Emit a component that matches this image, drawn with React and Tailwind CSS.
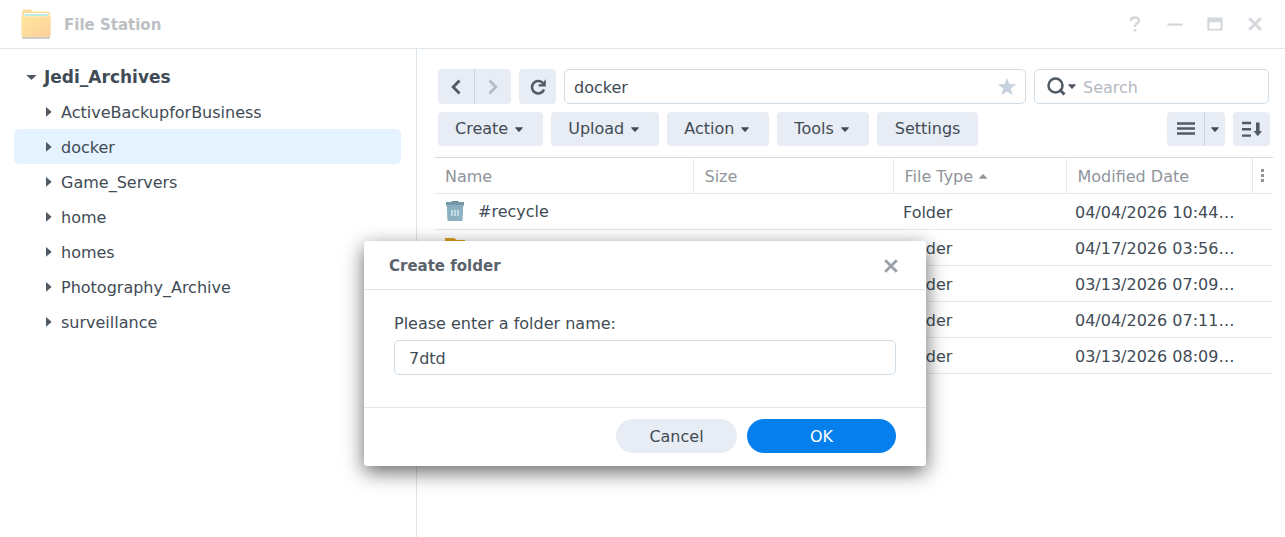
import React, { useState } from 'react';

const FOLDERS = [
  'ActiveBackupforBusiness',
  'docker',
  'Game_Servers',
  'home',
  'homes',
  'Photography_Archive',
  'surveillance',
];

const FILES = [
  { name: '#recycle', kind: 'trash', date: '04/04/2026 10:44:12' },
  { name: 'ad', kind: 'folder', date: '04/17/2026 03:56:40' },
  { name: '', kind: 'folder', date: '03/13/2026 07:09:25' },
  { name: '', kind: 'folder', date: '04/04/2026 07:11:31' },
  { name: '', kind: 'folder', date: '03/13/2026 08:09:02' },
];

const FolderLogo = () => (
  <svg width="32" height="32" viewBox="0 0 32 32" aria-hidden="true">
    <defs>
      <linearGradient id="front" x1="0" y1="0" x2="1" y2="1">
        <stop offset="0" stopColor="#ffe79c" />
        <stop offset="1" stopColor="#fdcf9c" />
      </linearGradient>
    </defs>
    <path d="M2 28h28v1.500a1.500 1.500 0 0 1-1.500 1.500h-25A1.500 1.500 0 0 1 2 29.500z" fill="#d2cdcd" />
    <path d="M2.300 3a1.500 1.500 0 0 1 1.500-1.500h7l2 2H28.500A1.500 1.500 0 0 1 30 5v7H2.300z" fill="#fbdc98" />
    <path d="M4 5h24.500v5H4z" fill="#fff" />
    <path d="M4.500 6h23.500v2H4.500z" fill="#bfeae0" />
    <path d="M1.200 10A1.500 1.500 0 0 1 2.700 8.300h26.600A1.500 1.500 0 0 1 30.800 10l-.3 17.200a1.800 1.800 0 0 1-1.800 1.800H3.300a1.800 1.800 0 0 1-1.800-1.800z" fill="url(#front)" />
  </svg>
);

const Caret = ({ className = '' }) => (
  <svg width="8" height="5" viewBox="0 0 8 5" className={className} aria-hidden="true">
    <path d="M0 .8Q0 .3.600.3h6.800q.6 0 .6.5L4.600 4.400q-.6.5-1.200 0z" fill="currentColor" />
  </svg>
);

const CloseIcon = () => (
  <svg width="14" height="14" viewBox="0 0 14 14" aria-hidden="true">
    <path d="M1.200 1.200l11.600 11.600M12.800 1.200l-11.600 11.600" stroke="currentColor" strokeWidth="2.800" />
  </svg>
);

const TrashIcon = () => (
  <svg width="20" height="22" viewBox="0 0 20 22" aria-hidden="true">
    <path d="M6.500 0h7v1h-7z" fill="#6d8a98" />
    <path d="M1 1h18v3.500H1z" fill="#7397a8" />
    <path d="M1.800 4.500h16.400l-.6 14.300a1.200 1.200 0 0 1-1.200 1.200H3.600a1.200 1.200 0 0 1-1.200-1.200z" fill="#8bb0c0" />
    <path d="M1.800 4.500h16.400v1H1.800z" fill="#7ea4b4" />
    <path d="M7 9v6M10 9v6M13 9v6" stroke="#c3dae3" strokeWidth="2" />
  </svg>
);

const FolderIcon = () => (
  <svg width="20" height="22" viewBox="0 0 20 22" aria-hidden="true">
    <path d="M0 1h9.500l2 2H20v16H0z" fill="#dca222" />
    <path d="M0 6h20v13H0z" fill="#f8c84a" />
  </svg>
);

const Header = () => (
  <header className="flex h-[49px] items-center border-b border-[#dfe7f0] pr-[18px] pl-5">
    <FolderLogo />
    <h1 className="ml-3 flex-1 pt-[2px] text-[15px] font-bold text-[#bcc0c4]">File Station</h1>
    <div className="flex items-center gap-4 text-[#d3d7dc]">
      <button aria-label="Help" className="flex size-6 items-center justify-center">
        <svg width="12" height="16" viewBox="0 0 12 16" aria-hidden="true">
          <path d="M2 5V4.500C2 2.500 3.700 1.500 6 1.500s4 1.200 4 3.200c0 2.300-4 2.800-4 5.300v1" fill="none" stroke="currentColor" strokeWidth="2.400" />
          <path d="M4.700 13h2.600v2.500H4.700z" fill="currentColor" />
        </svg>
      </button>
      <button aria-label="Minimize" className="flex size-6 items-center justify-center">
        <svg width="16" height="3" viewBox="0 0 16 3" aria-hidden="true">
          <path d="M.5.500h15v2.200H.5z" fill="currentColor" />
        </svg>
      </button>
      <button aria-label="Maximize" className="flex size-6 items-center justify-center">
        <svg width="16" height="14" viewBox="0 0 16 14" aria-hidden="true">
          <path d="M1.200.500h13.600a.8.8 0 0 1 .8.800v11.400a.8.8 0 0 1-.8.800H1.200a.8.8 0 0 1-.8-.800V1.300a.8.8 0 0 1 .8-.800zM2.500 5.200v6.500h11V5.200z" fill="currentColor" fillRule="evenodd" />
        </svg>
      </button>
      <button aria-label="Close window" className="flex size-6 items-center justify-center">
        <CloseIcon />
      </button>
    </div>
  </header>
);

const Sidebar = ({ current, onSelect }) => (
  <nav className="w-[417px] shrink-0 border-r border-[#dbe5ee] pt-[10px] pr-[15px] pl-[14px]">
    <button className="flex h-[35px] w-full items-center pt-[2px] pl-3 text-[17px] font-bold">
      <svg width="11" height="6" viewBox="0 0 11 6" className="mr-[7px]" aria-hidden="true">
        <path d="M.3 0h10.400L6 4.500q-.5.500-1 0z" fill="#505a64" />
      </svg>
      Jedi_Archives
    </button>
    {FOLDERS.map((name) => (
      <button
        key={name}
        onClick={() => onSelect(name)}
        className={`flex h-[35px] w-full items-center rounded-[5px] pt-[2px] pl-8 ${name === current ? 'bg-[#e5f2ff]' : ''}`}
      >
        <svg width="6" height="12" viewBox="0 0 6 12" className="mr-[9px]" aria-hidden="true">
          <path d="M0 0L5 4.200q.5.600 0 1.200L0 9.800z" fill="#505a64" />
        </svg>
        {name}
      </button>
    ))}
  </nav>
);

const barButton = 'flex items-center justify-center bg-[#e8ecf4] hover:bg-[#dde4ef]';

const PathBar = ({ current }) => (
  <div className="flex h-[35px] gap-2 pr-px">
    <div className="flex">
      <button aria-label="Back" className={`${barButton} w-[37px] rounded-l-[4px] border-r border-[#cbd3de]`}>
        <svg width="10" height="16" viewBox="0 0 10 16" aria-hidden="true">
          <path d="M8.500 1.500L2.200 8l6.300 6.500" fill="none" stroke="#505a64" strokeWidth="2.800" />
        </svg>
      </button>
      <button aria-label="Forward" className={`${barButton} w-9 rounded-r-[4px]`}>
        <svg width="10" height="16" viewBox="0 0 10 16" aria-hidden="true">
          <path d="M1.500 1.500L7.800 8l-6.300 6.500" fill="none" stroke="#b6bdc6" strokeWidth="2.800" />
        </svg>
      </button>
    </div>
    <button aria-label="Refresh" className={`${barButton} w-[37px] rounded-[4px]`}>
      <svg width="16" height="16" viewBox="0 0 16 16" aria-hidden="true">
        <path d="M12.600 3.800A6.200 6.200 0 1 0 14 10.500" fill="none" stroke="#505a64" strokeWidth="2.600" />
        <path d="M15.800.300v7.200H8.600V5.200h2.800z" fill="#505a64" />
      </svg>
    </button>
    <div className="flex min-w-0 flex-1 items-center rounded-[5px] border border-[#d0dde7] pr-2 pl-[9px]">
      <input aria-label="Path" value={current} readOnly className="min-w-0 flex-1 pt-[2px] outline-none" />
      <button aria-label="Add to favorites">
        <svg width="20" height="20" viewBox="0 0 20 20" aria-hidden="true">
          <path d="M10 .800l2.300 6.200 6.900.300-5.400 4.200 1.900 6.700L10 14.400l-5.700 3.800 1.900-6.700L.8 7.300l6.900-.300z" fill="#c8d1de" />
        </svg>
      </button>
    </div>
    <div className="flex w-[235px] items-center rounded-[5px] border border-[#d0dde7] pl-3">
      <button aria-label="Search options" className="flex items-center">
        <svg width="19" height="19" viewBox="0 0 19 19" aria-hidden="true">
          <circle cx="8.500" cy="8.500" r="7" fill="none" stroke="#505a64" strokeWidth="2.500" />
          <path d="M12.500 12.500l5 5" stroke="#505a64" strokeWidth="3" />
        </svg>
        <Caret className="ml-[2px] text-[#505a64]" />
      </button>
      <input aria-label="Search" placeholder="Search" className="ml-[7px] min-w-0 flex-1 pt-[2px] outline-none placeholder:text-[#b4b9bf]" />
    </div>
  </div>
);

const ActionBar = () => (
  <div className="mt-2 flex h-[34px] gap-2">
    {['Create', 'Upload', 'Action', 'Tools'].map((label) => (
      <button key={label} className={`${barButton} rounded-[4px] pr-5 pl-[17px]`}>
        {label}
        <Caret className="ml-[7px]" />
      </button>
    ))}
    <button className={`${barButton} rounded-[4px] px-[18px]`}>Settings</button>
    <div className="ml-auto flex">
      <button aria-label="List view" className={`${barButton} w-[38px] rounded-l-[4px] border-r border-[#cbd3de]`}>
        <svg width="18" height="14" viewBox="0 0 18 14" aria-hidden="true">
          <path d="M0 1.500h18M0 6.500h18M0 11.500h18" stroke="#505a64" strokeWidth="2.400" />
        </svg>
      </button>
      <button aria-label="View options" className={`${barButton} w-5 rounded-r-[4px]`}>
        <Caret />
      </button>
    </div>
    <button aria-label="Sort" className={`${barButton} w-[37px] rounded-[4px]`}>
      <svg width="20" height="16" viewBox="0 0 20 16" aria-hidden="true">
        <path d="M0 2h9M0 8.300h9M0 14.600h9" stroke="#505a64" strokeWidth="2.400" />
        <path d="M14 1.500h3.600v8.500h2.400l-4.200 5.200-4.200-5.200H14z" fill="#505a64" />
      </svg>
    </button>
  </div>
);

const FileTable = () => (
  <table className="mt-[11px] w-full table-fixed border-t border-[#d0dae4] text-left">
    <thead className="text-[#8f959b]">
      <tr className="h-9 border-b border-[#e4e8ee]">
        <th className="border-r border-[#e4e8ee] pt-[2px] pl-[10px] font-normal">Name</th>
        <th className="w-[200px] border-r border-[#e4e8ee] pt-[2px] pl-[11px] font-normal">Size</th>
        <th className="w-[173px] border-r border-[#e4e8ee] pt-[2px] pl-[11px] font-normal">
          <span className="flex items-center gap-[6px]">
            File Type
            <Caret className="rotate-180" />
          </span>
        </th>
        <th className="w-[186px] border-r border-[#e4e8ee] pt-[2px] pl-[11px] font-normal">Modified Date</th>
        <th className="w-[21px]">
          <button aria-label="Columns" className="flex w-full justify-center">
            <svg width="3" height="13" viewBox="0 0 3 13" aria-hidden="true">
              <path d="M0 0h3v3H0zM0 5h3v3H0zM0 10h3v3H0z" fill="#8f959b" />
            </svg>
          </button>
        </th>
      </tr>
    </thead>
    <tbody>
      {FILES.map((file, i) => (
        <tr key={i} className="h-9 border-b border-[#e4e8ee]">
          <td className="pl-[10px]">
            <span className="flex items-center gap-[13px]">
              {file.kind === 'trash' ? <TrashIcon /> : <FolderIcon />}
              {file.name}
            </span>
          </td>
          <td />
          <td className="pt-[2px] pl-[10px]">Folder</td>
          <td className="truncate pt-[2px] pr-4 pl-[9px]">{file.date}</td>
          <td />
        </tr>
      ))}
    </tbody>
  </table>
);

const CreateFolderDialog = ({ onClose }) => {
  const [folderName, setFolderName] = useState('7dtd');

  return (
    <div
      role="dialog"
      aria-labelledby="dialog-title"
      className="absolute top-[241px] left-[364px] w-[562px] rounded-[3px] bg-white shadow-[0_6px_20px_rgba(0,0,0,0.6)]"
    >
      <div className="flex h-[49px] items-center justify-between border-b border-[#dfe6ed] pt-[2px] pr-7 pl-[25px]">
        <h2 id="dialog-title" className="text-[15px] font-bold text-[#5b636c]">Create folder</h2>
        <button aria-label="Close" onClick={onClose} className="text-[#9aa0a7]">
          <CloseIcon />
        </button>
      </div>
      <div className="flex flex-col gap-1 px-[30px] pt-[22px] pb-8">
        <label htmlFor="folder-name">Please enter a folder name:</label>
        <input
          id="folder-name"
          value={folderName}
          onChange={(e) => setFolderName(e.target.value)}
          className="h-[35px] rounded-[5px] border border-[#d0dde7] px-[14px] pt-[2px] outline-none"
        />
      </div>
      <div className="flex justify-end gap-[10px] border-t border-[#e3e6ea] px-[30px] pt-[11px] pb-[13px]">
        <button onClick={onClose} className="h-[34px] w-[121px] rounded-full bg-[#e8ecf4] pt-[2px]">Cancel</button>
        <button onClick={onClose} className="h-[34px] w-[149px] rounded-full bg-[#057feb] pt-[2px] text-white">OK</button>
      </div>
    </div>
  );
};

const App = () => {
  const [current, setCurrent] = useState('docker');
  const [dialogOpen, setDialogOpen] = useState(true);

  return (
    <div className="relative flex min-h-screen flex-col overflow-hidden bg-white font-['DejaVu_Sans',sans-serif] text-base text-[#414b55]">
      <Header />
      <div className="flex flex-1">
        <Sidebar current={current} onSelect={setCurrent} />
        <main className="min-w-0 flex-1 pt-5 pr-3 pl-[18px]">
          <div className="px-[3px]">
            <PathBar current={current} />
            <ActionBar />
          </div>
          <FileTable />
        </main>
      </div>
      {dialogOpen && <CreateFolderDialog onClose={() => setDialogOpen(false)} />}
    </div>
  );
};

export default App;
